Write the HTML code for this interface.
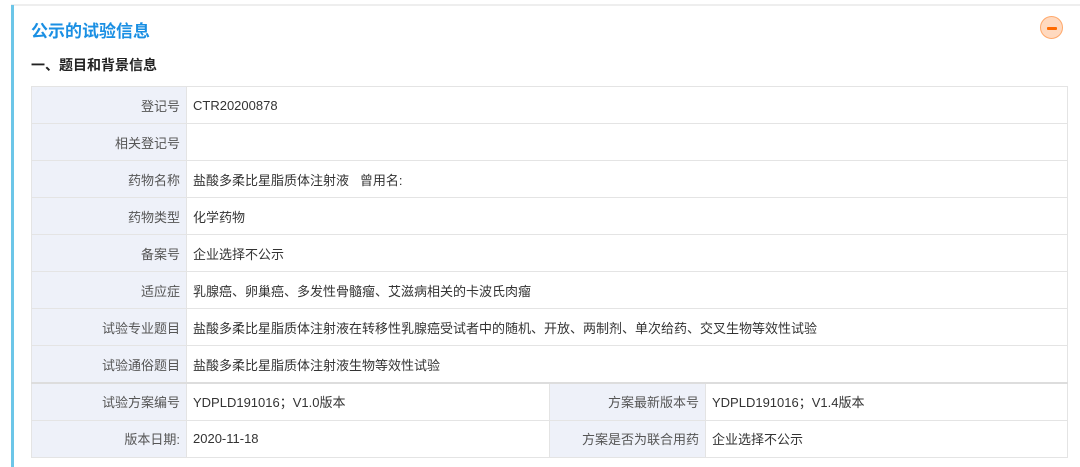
<!DOCTYPE html>
<html><head><meta charset="utf-8"><style>
body{margin:0;width:1080px;height:467px;background:#fff;font-family:"Liberation Sans","Noto Sans CJK SC",sans-serif;position:relative;overflow:hidden}
.top{position:absolute;left:11px;top:4px;width:1069px;height:2px;background:#eeeeee}
.bar{position:absolute;left:11px;top:5px;width:3px;height:462px;background:#6cc6e8}
.t1{position:absolute;left:31px;top:17px;font-size:17px;font-weight:bold;color:#1a8fe3}
.t2{position:absolute;left:31px;top:55px;font-size:14px;font-weight:bold;color:#222}
.btn{position:absolute;left:1040px;top:16px;width:23px;height:23px;border-radius:50%;background:#ffd9bf;border:1px solid #ffa86a;box-sizing:border-box}
.btn:after{content:"";position:absolute;left:5.5px;top:9.5px;width:10px;height:3px;background:#ff6a00;border-radius:1px}
table{position:absolute;left:31px;border-collapse:collapse;font-size:13px;color:#333;table-layout:fixed}
td{border:1px solid #e4e4e4;height:37px;padding:0 6px;box-sizing:border-box;white-space:nowrap}
td.l{background:#eef1f9;text-align:right;color:#555}
#a{top:86px;width:1037px}
#b{top:382px;width:1037px;border-top:2px solid #ddd}
</style></head><body>
<div class="top"></div><div class="bar"></div>
<div class="t1">公示的试验信息</div>
<div class="btn"></div>
<div class="t2">一、题目和背景信息</div>
<table id="a"><colgroup><col style="width:155px"><col></colgroup>
<tr><td class="l">登记号</td><td>CTR20200878</td></tr>
<tr><td class="l">相关登记号</td><td></td></tr>
<tr><td class="l">药物名称</td><td>盐酸多柔比星脂质体注射液&nbsp;&nbsp;&nbsp;曾用名:</td></tr>
<tr><td class="l">药物类型</td><td>化学药物</td></tr>
<tr><td class="l">备案号</td><td>企业选择不公示</td></tr>
<tr><td class="l">适应症</td><td>乳腺癌、卵巢癌、多发性骨髓瘤、艾滋病相关的卡波氏肉瘤</td></tr>
<tr><td class="l">试验专业题目</td><td>盐酸多柔比星脂质体注射液在转移性乳腺癌受试者中的随机、开放、两制剂、单次给药、交叉生物等效性试验</td></tr>
<tr><td class="l">试验通俗题目</td><td>盐酸多柔比星脂质体注射液生物等效性试验</td></tr>
</table>
<table id="b"><colgroup><col style="width:155px"><col style="width:363px"><col style="width:156px"><col></colgroup>
<tr><td class="l">试验方案编号</td><td>YDPLD191016；V1.0版本</td><td class="l">方案最新版本号</td><td>YDPLD191016；V1.4版本</td></tr>
<tr><td class="l">版本日期:</td><td>2020-11-18</td><td class="l">方案是否为联合用药</td><td>企业选择不公示</td></tr>
</table>
</body></html>
